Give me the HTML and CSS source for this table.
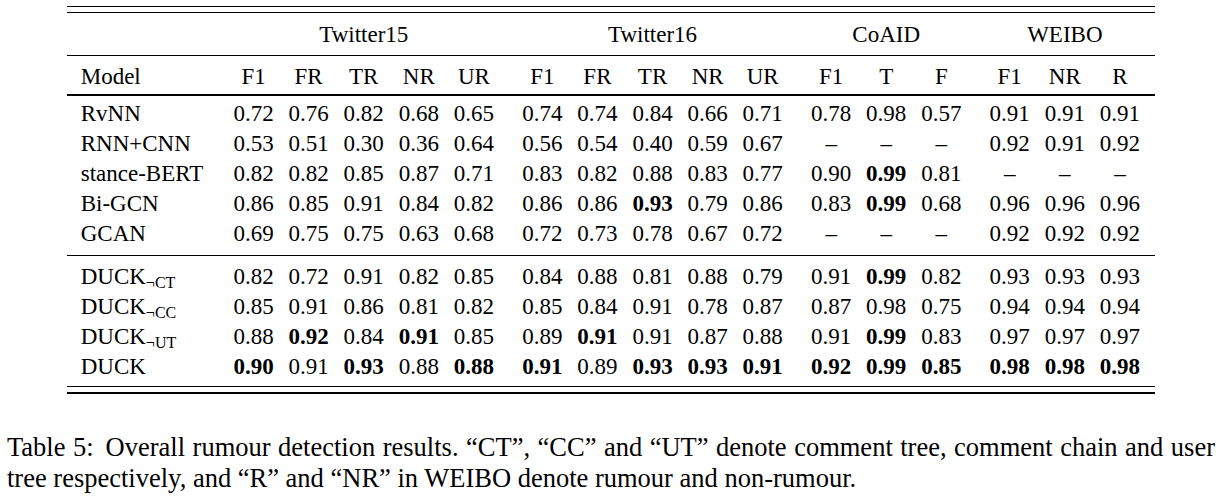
FILE: index.html
```html
<!DOCTYPE html>
<html>
<head>
<meta charset="utf-8">
<link rel="stylesheet" href="styles.css">
</head>
<body>
<div class="frame">
<table class="results">
  <colgroup>
    <col class="c-model">
    <col class="c-num"><col class="c-num"><col class="c-num"><col class="c-num"><col class="c-num">
    <col class="c-gap">
    <col class="c-num"><col class="c-num"><col class="c-num"><col class="c-num"><col class="c-num">
    <col class="c-gap">
    <col class="c-num"><col class="c-num"><col class="c-num">
    <col class="c-gap">
    <col class="c-num"><col class="c-num"><col class="c-num">
    <col class="c-end">
  </colgroup>
  <thead>
    <tr class="groups">
      <td></td>
      <td colspan="5">Twitter15</td>
      <td></td>
      <td colspan="5">Twitter16</td>
      <td></td>
      <td colspan="3">CoAID</td>
      <td></td>
      <td colspan="3">WEIBO</td>
      <td></td>
    </tr>
    <tr class="heads">
      <td class="model">Model</td>
      <td>F1</td><td>FR</td><td>TR</td><td>NR</td><td>UR</td>
      <td></td>
      <td>F1</td><td>FR</td><td>TR</td><td>NR</td><td>UR</td>
      <td></td>
      <td>F1</td><td>T</td><td>F</td>
      <td></td>
      <td>F1</td><td>NR</td><td>R</td>
      <td></td>
    </tr>
  </thead>
  <tbody class="base">
    <tr>
      <td class="model">RvNN</td>
      <td>0.72</td><td>0.76</td><td>0.82</td><td>0.68</td><td>0.65</td><td></td>
      <td>0.74</td><td>0.74</td><td>0.84</td><td>0.66</td><td>0.71</td><td></td>
      <td>0.78</td><td>0.98</td><td>0.57</td><td></td>
      <td>0.91</td><td>0.91</td><td>0.91</td><td></td>
    </tr>
    <tr>
      <td class="model">RNN+CNN</td>
      <td>0.53</td><td>0.51</td><td>0.30</td><td>0.36</td><td>0.64</td><td></td>
      <td>0.56</td><td>0.54</td><td>0.40</td><td>0.59</td><td>0.67</td><td></td>
      <td>–</td><td>–</td><td>–</td><td></td>
      <td>0.92</td><td>0.91</td><td>0.92</td><td></td>
    </tr>
    <tr>
      <td class="model">stance-BERT</td>
      <td>0.82</td><td>0.82</td><td>0.85</td><td>0.87</td><td>0.71</td><td></td>
      <td>0.83</td><td>0.82</td><td>0.88</td><td>0.83</td><td>0.77</td><td></td>
      <td>0.90</td><td class="b">0.99</td><td>0.81</td><td></td>
      <td>–</td><td>–</td><td>–</td><td></td>
    </tr>
    <tr>
      <td class="model">Bi-GCN</td>
      <td>0.86</td><td>0.85</td><td>0.91</td><td>0.84</td><td>0.82</td><td></td>
      <td>0.86</td><td>0.86</td><td class="b">0.93</td><td>0.79</td><td>0.86</td><td></td>
      <td>0.83</td><td class="b">0.99</td><td>0.68</td><td></td>
      <td>0.96</td><td>0.96</td><td>0.96</td><td></td>
    </tr>
    <tr>
      <td class="model">GCAN</td>
      <td>0.69</td><td>0.75</td><td>0.75</td><td>0.63</td><td>0.68</td><td></td>
      <td>0.72</td><td>0.73</td><td>0.78</td><td>0.67</td><td>0.72</td><td></td>
      <td>–</td><td>–</td><td>–</td><td></td>
      <td>0.92</td><td>0.92</td><td>0.92</td><td></td>
    </tr>
  </tbody>
  <tbody class="ours">
    <tr>
      <td class="model">DUCK<sub>¬CT</sub></td>
      <td>0.82</td><td>0.72</td><td>0.91</td><td>0.82</td><td>0.85</td><td></td>
      <td>0.84</td><td>0.88</td><td>0.81</td><td>0.88</td><td>0.79</td><td></td>
      <td>0.91</td><td class="b">0.99</td><td>0.82</td><td></td>
      <td>0.93</td><td>0.93</td><td>0.93</td><td></td>
    </tr>
    <tr>
      <td class="model">DUCK<sub>¬CC</sub></td>
      <td>0.85</td><td>0.91</td><td>0.86</td><td>0.81</td><td>0.82</td><td></td>
      <td>0.85</td><td>0.84</td><td>0.91</td><td>0.78</td><td>0.87</td><td></td>
      <td>0.87</td><td>0.98</td><td>0.75</td><td></td>
      <td>0.94</td><td>0.94</td><td>0.94</td><td></td>
    </tr>
    <tr>
      <td class="model">DUCK<sub>¬UT</sub></td>
      <td>0.88</td><td class="b">0.92</td><td>0.84</td><td class="b">0.91</td><td>0.85</td><td></td>
      <td>0.89</td><td class="b">0.91</td><td>0.91</td><td>0.87</td><td>0.88</td><td></td>
      <td>0.91</td><td class="b">0.99</td><td>0.83</td><td></td>
      <td>0.97</td><td>0.97</td><td>0.97</td><td></td>
    </tr>
    <tr>
      <td class="model">DUCK</td>
      <td class="b">0.90</td><td>0.91</td><td class="b">0.93</td><td>0.88</td><td class="b">0.88</td><td></td>
      <td class="b">0.91</td><td>0.89</td><td class="b">0.93</td><td class="b">0.93</td><td class="b">0.91</td><td></td>
      <td class="b">0.92</td><td class="b">0.99</td><td class="b">0.85</td><td></td>
      <td class="b">0.98</td><td class="b">0.98</td><td class="b">0.98</td><td></td>
    </tr>
  </tbody>
</table>
</div>
<div class="caption">
  <div class="cap-line full"><span class="cap-label">Table 5:</span>Overall rumour detection results. “CT”, “CC” and “UT” denote comment tree, comment chain and user</div>
  <div class="cap-line">tree respectively, and “R” and “NR” in WEIBO denote rumour and non-rumour.</div>
</div>
</body>
</html>
```
FILE: styles.css
```css
html, body {
  margin: 0;
  padding: 0;
  background: #ffffff;
}

body {
  font-family: "Liberation Serif", "Times New Roman", serif;
  font-size: 23px;
  color: #000000;
}

.frame {
  width: 1088px;
  margin: 6px 0 0 67px;
  border-top: 1px solid #000;
  border-bottom: 2px solid #000;
  padding: 5px 0 5px 0;
}

.results {
  width: 1088px;
  table-layout: fixed;
  border-collapse: collapse;
  border-top: 1px solid #000;
  border-bottom: 1px solid #000;
}

.c-model { width: 159px; }
.c-num { width: 55.1px; }
.c-gap { width: 13.3px; }
.c-end { width: 7.5px; }

.results td {
  padding: 0;
  height: 30px;
  line-height: 30px;
  text-align: center;
  white-space: nowrap;
}

.results td.model {
  text-align: left;
  padding-left: 13.7px;
}

.results td.b {
  font-weight: bold;
}

.groups {
  border-bottom: 1px solid #000;
}
.groups td {
  padding-top: 7px;
  padding-bottom: 5px;
}

.heads {
  border-bottom: 2px solid #000;
}
.heads td {
  padding-top: 5.5px;
  padding-bottom: 2px;
}

.base {
  border-bottom: 1px solid #000;
}
.base tr:first-child td {
  padding-top: 3.4px;
}
.base tr:last-child td {
  padding-bottom: 6.3px;
}

.ours tr:first-child td {
  padding-top: 6px;
}
.ours tr:last-child td {
  padding-bottom: 4px;
}

.results sub {
  font-size: 16px;
  line-height: 0;
  vertical-align: -4px;
}

.caption {
  width: 1208px;
  margin: 38px 0 0 7px;
  font-size: 26.5px;
  line-height: 31px;
}

.cap-line.full {
  white-space: nowrap;
  text-align: justify;
  text-align-last: justify;
}

.cap-label {
  margin-right: 12px;
}
```
